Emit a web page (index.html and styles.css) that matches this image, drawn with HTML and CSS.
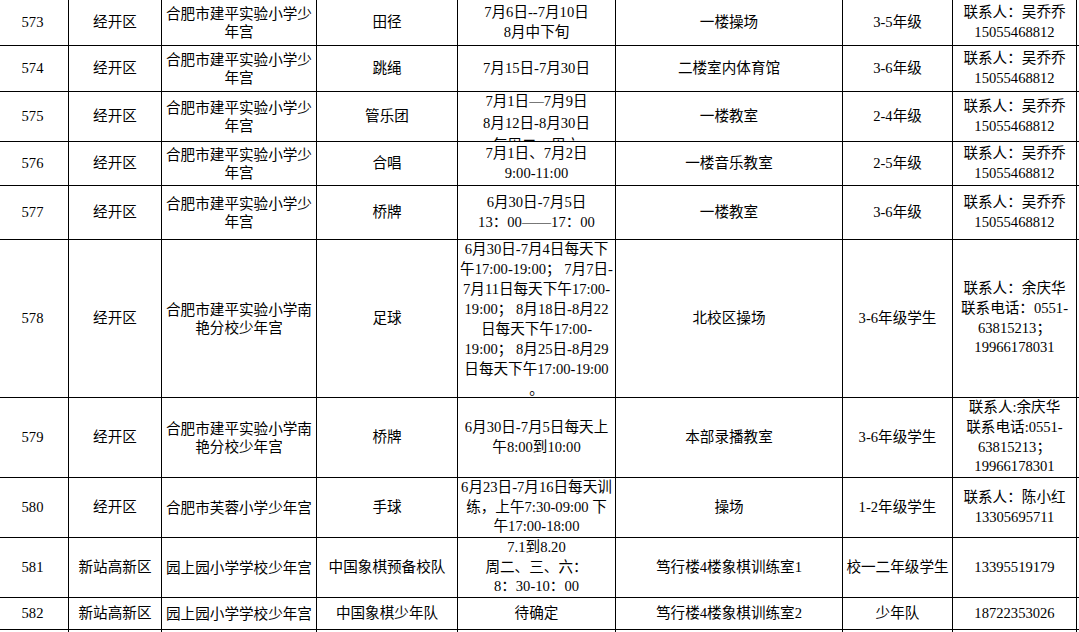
FILE: index.html
```html
<!DOCTYPE html>
<html lang="zh-CN">
<head>
<meta charset="utf-8">
<title>少年宫活动安排</title>
<link rel="stylesheet" href="styles.css">
</head>
<body>
<table class="sheet">
  <colgroup>
    <col class="c-no"><col class="c-area"><col class="c-school"><col class="c-item"><col class="c-date"><col class="c-place"><col class="c-grade"><col class="c-contact"><col class="c-extra">
  </colgroup>
  <tbody>
    <tr class="r573">
      <td>573</td><td>经开区</td><td class="school">合肥市建平实验小学少<br>年宫</td><td>田径</td>
      <td>7月6日--7月10日<br>8月中下旬</td><td>一楼操场</td><td>3-5年级</td>
      <td>联系人：吴乔乔<br>15055468812</td><td></td>
    </tr>
    <tr class="r574">
      <td>574</td><td>经开区</td><td class="school">合肥市建平实验小学少<br>年宫</td><td>跳绳</td>
      <td>7月15日-7月30日</td><td>二楼室内体育馆</td><td>3-6年级</td>
      <td>联系人：吴乔乔<br>15055468812</td><td></td>
    </tr>
    <tr class="r575">
      <td>575</td><td>经开区</td><td class="school">合肥市建平实验小学少<br>年宫</td><td>管乐团</td>
      <td><div class="clip clip575"><div class="shift">7月1日—7月9日<br>8月12日-8月30日<br>每周二—周六</div></div></td><td>一楼教室</td><td>2-4年级</td>
      <td>联系人：吴乔乔<br>15055468812</td><td></td>
    </tr>
    <tr class="r576">
      <td>576</td><td>经开区</td><td class="school">合肥市建平实验小学少<br>年宫</td><td>合唱</td>
      <td>7月1日、7月2日<br>9:00-11:00</td><td>一楼音乐教室</td><td>2-5年级</td>
      <td>联系人：吴乔乔<br>15055468812</td><td></td>
    </tr>
    <tr class="r577">
      <td>577</td><td>经开区</td><td class="school">合肥市建平实验小学少<br>年宫</td><td>桥牌</td>
      <td>6月30日-7月5日<br>13：00——17：00</td><td>一楼教室</td><td>3-6年级</td>
      <td>联系人：吴乔乔<br>15055468812</td><td></td>
    </tr>
    <tr class="r578">
      <td>578</td><td>经开区</td><td class="school">合肥市建平实验小学南<br>艳分校少年宫</td><td>足球</td>
      <td><div class="clip clip578">6月30日-7月4日每天下<br>午17:00-19:00； 7月7日-<br>7月11日每天下午17:00-<br>19:00； 8月18日-8月22<br>日每天下午17:00-<br>19:00； 8月25日-8月29<br>日每天下午17:00-19:00<br>。</div></td>
      <td>北校区操场</td><td>3-6年级学生</td>
      <td>联系人：余庆华<br>联系电话：0551-<br>63815213；<br>19966178031</td><td></td>
    </tr>
    <tr class="r579">
      <td>579</td><td>经开区</td><td class="school">合肥市建平实验小学南<br>艳分校少年宫</td><td>桥牌</td>
      <td>6月30日-7月5日每天上<br>午8:00到10:00</td><td>本部录播教室</td><td>3-6年级学生</td>
      <td>联系人:余庆华<br>联系电话:0551-<br>63815213；<br>19966178301</td><td></td>
    </tr>
    <tr class="r580">
      <td>580</td><td>经开区</td><td class="school">合肥市芙蓉小学少年宫</td><td>手球</td>
      <td>6月23日-7月16日每天训<br>练，上午7:30-09:00 下<br>午17:00-18:00</td><td>操场</td><td>1-2年级学生</td>
      <td>联系人：陈小红<br>13305695711</td><td></td>
    </tr>
    <tr class="r581">
      <td>581</td><td>新站高新区</td><td class="school">园上园小学学校少年宫</td><td>中国象棋预备校队</td>
      <td>7.1到8.20<br>周二、三、六：<br>8：30-10：00</td><td>笃行楼4楼象棋训练室1</td><td>校一二年级学生</td>
      <td>13395519179</td><td></td>
    </tr>
    <tr class="r582">
      <td>582</td><td>新站高新区</td><td class="school">园上园小学学校少年宫</td><td>中国象棋少年队</td>
      <td>待确定</td><td>笃行楼4楼象棋训练室2</td><td>少年队</td>
      <td>18722353026</td><td></td>
    </tr>
    <tr class="r583">
      <td></td><td></td><td></td><td></td><td></td><td></td><td></td><td></td><td></td>
    </tr>
  </tbody>
</table>
</body>
</html>
```

FILE: styles.css
```css
html, body {
  margin: 0;
  padding: 0;
  background: #ffffff;
  overflow: hidden;
}

body {
  width: 1079px;
  height: 632px;
}

.sheet {
  border-collapse: collapse;
  table-layout: fixed;
  width: 1140px;
  margin: -1px 0 0 -4px;
  font-family: "Liberation Serif", "Noto Sans CJK SC", serif;
  font-size: 14.6px;
  line-height: 19.6px;
  color: #000000;
}

.c-no { width: 72px; }
.c-area { width: 93px; }
.c-school { width: 155px; }
.c-item { width: 141px; }
.c-date { width: 158px; }
.c-place { width: 227px; }
.c-grade { width: 110px; }
.c-contact { width: 124px; }
.c-extra { width: 60px; }

.sheet td {
  border: 1px solid #000000;
  padding: 0 1px;
  text-align: center;
  vertical-align: middle;
  white-space: nowrap;
  overflow: hidden;
}

.sheet td.school {
  line-height: 18px;
}

.r573 { height: 46px; }
.r574 { height: 46px; }
.r575 { height: 50px; }
.r576 { height: 44px; }
.r577 { height: 54px; }
.r578 { height: 158px; }
.r579 { height: 80px; }
.r580 { height: 60px; }
.r581 { height: 60px; }
.r582 { height: 32px; }
.r583 { height: 40px; }

.clip {
  overflow: hidden;
}

.clip575 {
  height: 49px;
  line-height: 22px;
}

.clip575 .shift {
  margin-top: -2px;
}

.clip578 {
  height: 157px;
  line-height: 20px;
  display: flex;
  flex-direction: column;
  justify-content: center;
}
```
